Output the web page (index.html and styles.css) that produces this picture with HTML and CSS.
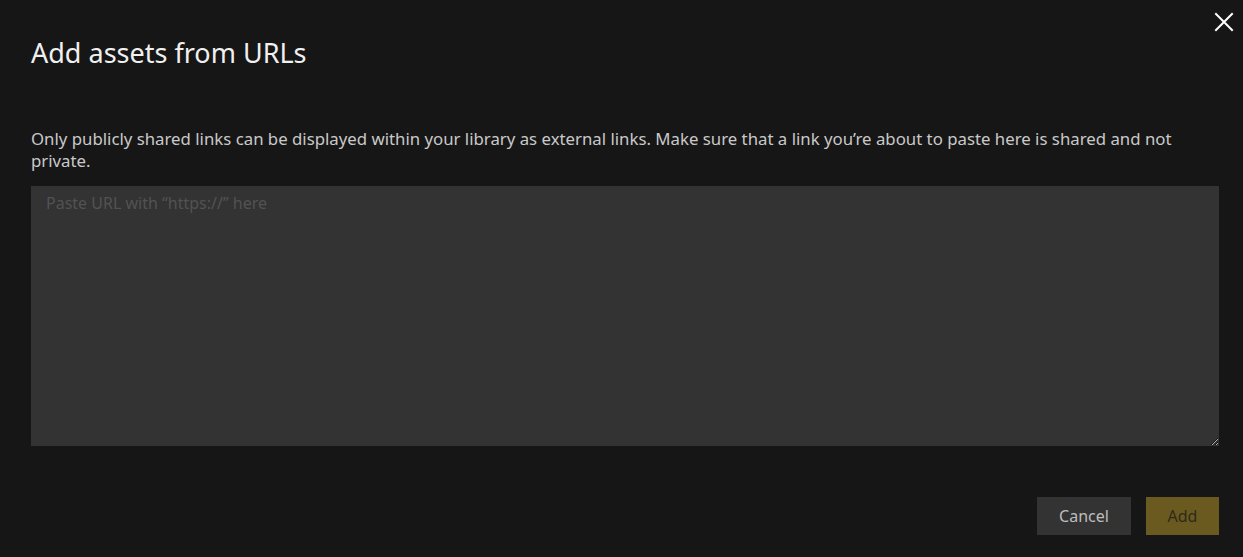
FILE: index.html
```html
<!DOCTYPE html>
<html lang="en">
<head>
    <meta charset="UTF-8">
    <meta name="viewport" content="width=device-width, initial-scale=1.0">
    <title>Add assets from URLs</title>
    <link rel="stylesheet" href="styles.css">
</head>
<body>
    <div class="dialog">
        <button class="close" aria-label="Close">
            <svg width="20" height="20" viewBox="0 0 20 20">
                <path d="M2 2 L18 18 M18 2 L2 18" stroke="#fff" stroke-width="2" stroke-linecap="square"/>
            </svg>
        </button>
        <h1 class="title">Add assets from URLs</h1>
        <p class="note">Only publicly shared links can be displayed within your library as external links. Make sure that a link you’re about to paste here is shared and not private.</p>
        <textarea class="urls" placeholder="Paste URL with “https://” here"></textarea>
        <div class="actions">
            <button class="btn cancel">Cancel</button>
            <button class="btn add">Add</button>
        </div>
    </div>
</body>
</html>
```

FILE: styles.css
```css
body {
    margin: 0;
    background-color: #161616;
    font-family: "Noto Sans", "Open Sans", sans-serif;
    color: #e8e8e8;
}

.dialog {
    position: relative;
    height: 557px;
    box-sizing: border-box;
    padding: 34px 24px 22px 31px;
    display: flex;
    flex-direction: column;
}

.close {
    position: absolute;
    top: 12px;
    right: 9px;
    border: none;
    background: none;
    padding: 0;
    cursor: pointer;
}

.title {
    margin: 0;
    font-size: 27px;
    font-weight: 400;
    line-height: 38px;
    color: #f0f0f0;
}

.note {
    margin: 56px 0 0;
    font-size: 16.8px;
    line-height: 22px;
    color: #c9c9c9;
}

.urls {
    margin-top: 14px;
    height: 260px;
    box-sizing: border-box;
    border: none;
    outline: none;
    background-color: #333333;
    color: #ddd;
    padding: 6px 15px;
    font-family: inherit;
    font-size: 16px;
    resize: vertical;
}

.urls::placeholder {
    color: #525252;
}

.actions {
    margin-top: auto;
    display: flex;
    justify-content: flex-end;
    gap: 15px;
}

.btn {
    border: none;
    height: 38px;
    padding: 0 20px;
    font-family: inherit;
    font-size: 16px;
    cursor: pointer;
}

.cancel {
    background-color: #333333;
    color: #bdbdbd;
    width: 94px;
}

.add {
    background-color: #6b5a1f;
    color: #2e2a1a;
    width: 73px;
}
```
